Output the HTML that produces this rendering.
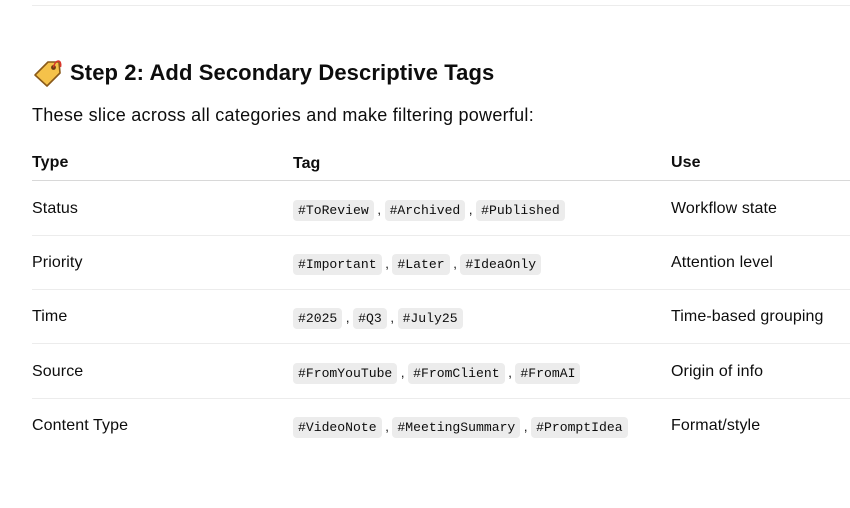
<!DOCTYPE html>
<html><head><meta charset="utf-8"><style>
*{margin:0;padding:0;box-sizing:border-box}
body{width:850px;height:508px;background:#fff;font-family:"Liberation Sans",sans-serif;color:#0d0d0d;position:relative;overflow:hidden}
.hr{position:absolute;left:32px;right:0;top:5px;border-top:1px solid #ececec}
h3{position:absolute;left:32px;top:58px;font-size:22px;font-weight:bold;display:flex;align-items:center;gap:7px;letter-spacing:0.1px}
p{position:absolute;left:32px;top:105px;font-size:18px;letter-spacing:0.27px}
.row{position:absolute;left:32px;right:0;height:54px;display:flex;align-items:center;font-size:16px;border-bottom:1px solid #ececec;letter-spacing:0.1px}
.row div:nth-child(1){width:261px}
.row div:nth-child(2){width:378px;font-size:13px;padding-top:2px;letter-spacing:0}
.hd{font-weight:bold;height:36px;top:145px;border-bottom:1px solid #d8d8d8}
code{font-family:"Liberation Mono","DejaVu Sans Mono",monospace;font-size:13.1px;background:#ececec;border-radius:4px;padding:3px 5px}
</style></head><body>
<div class="hr"></div>
<h3><svg width="31" height="30" viewBox="0 0 31 30"><path d="M3 17 L16 4 L27 4 L28 15 L15 28 Z" fill="#f5c24a" stroke="#8a5a1a" stroke-width="1.6" stroke-linejoin="round"/><circle cx="21.5" cy="9.5" r="2.4" fill="#6b3b10"/><path d="M21.5 9.5 C23 1 30 1 28.5 9" fill="none" stroke="#d8362b" stroke-width="1.5"/></svg>Step 2: Add Secondary Descriptive Tags</h3>
<p>These slice across all categories and make filtering powerful:</p>
<div class="row hd"><div>Type</div><div style="font-size:16px">Tag</div><div>Use</div></div>
<div class="row" style="top:182px"><div>Status</div><div><code>#ToReview</code> , <code>#Archived</code> , <code>#Published</code></div><div>Workflow state</div></div>
<div class="row" style="top:236px"><div>Priority</div><div><code>#Important</code> , <code>#Later</code> , <code>#IdeaOnly</code></div><div>Attention level</div></div>
<div class="row" style="top:290px"><div>Time</div><div><code>#2025</code> , <code>#Q3</code> , <code>#July25</code></div><div>Time-based grouping</div></div>
<div class="row" style="top:345px"><div>Source</div><div><code>#FromYouTube</code> , <code>#FromClient</code> , <code>#FromAI</code></div><div>Origin of info</div></div>
<div class="row" style="top:399px;border-bottom:none"><div>Content Type</div><div><code>#VideoNote</code> , <code>#MeetingSummary</code> , <code>#PromptIdea</code></div><div>Format/style</div></div>
</body></html>
